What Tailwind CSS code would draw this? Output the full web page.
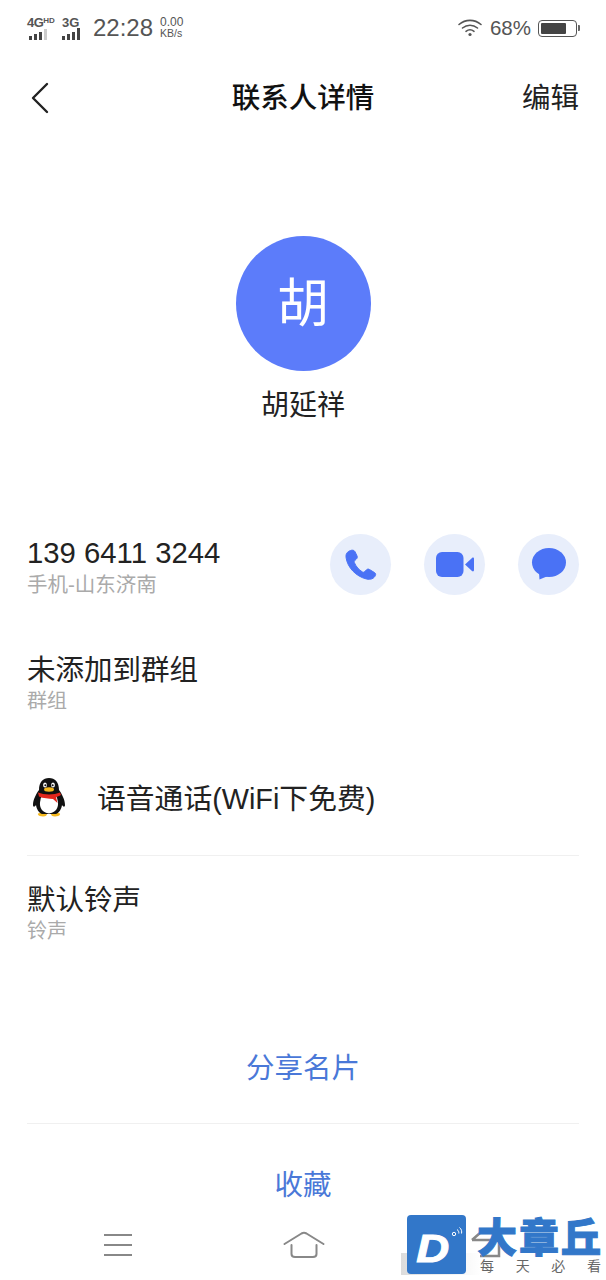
<html>
  <head>
    <title>联系人详情</title>
    <meta charset="utf-8" />
    <script src="https://cdn.jsdelivr.net/npm/@tailwindcss/browser@4"></script>
  </head>
  <body class="bg-white">
    <div class="relative w-[606px] h-[1280px] overflow-hidden bg-white text-[#222] font-['Liberation_Sans','Noto_Sans_CJK_SC',sans-serif]">
      <!-- status bar -->
      <div class="h-[56px] pl-[27px] pr-[26px] flex items-center justify-between text-[#555]">
        <div class="flex items-center">
          <div class="w-[28px] h-[24px] flex flex-col">
            <div class="flex items-start h-[14px]">
              <span class="text-[13px] leading-[13px] font-bold tracking-[-0.5px]">4G</span>
              <span class="text-[8px] leading-[9px] font-bold">HD</span>
            </div>
            <div class="flex items-end gap-[2px] h-[10px] pl-[2px]">
              <i class="block w-[3px] h-[4px] bg-[#444]"></i>
              <i class="block w-[3px] h-[6px] bg-[#444]"></i>
              <i class="block w-[3px] h-[8px] bg-[#444]"></i>
              <i class="block w-[3px] h-[11px] bg-[#ccc]"></i>
            </div>
          </div>
          <div class="ml-[7px] w-[24px] h-[24px] flex flex-col">
            <span class="text-[13px] leading-[14px] font-bold h-[14px]">3G</span>
            <div class="flex items-end gap-[2px] h-[10px]">
              <i class="block w-[3px] h-[4px] bg-[#444]"></i>
              <i class="block w-[3px] h-[6px] bg-[#444]"></i>
              <i class="block w-[3px] h-[8px] bg-[#444]"></i>
              <i class="block w-[3px] h-[12px] bg-[#444]"></i>
            </div>
          </div>
          <span class="ml-[7px] text-[24px] leading-[28px]">22:28</span>
          <div class="ml-[7px] flex flex-col text-[#555] -mt-[1px]">
            <span class="text-[12px] leading-[11px]">0.00</span>
            <span class="text-[10.500px] leading-[11px]">KB/s</span>
          </div>
        </div>
        <div class="flex items-center">
          <svg width="26" height="20" viewBox="0 0 26 20" fill="none" stroke="#555" stroke-width="1.600" stroke-linecap="round">
            <path d="M2 6.500C8.500 1 17.500 1 24 6.500" />
            <path d="M5.500 10C10 6.300 16 6.300 20.500 10" />
            <path d="M9 13.300C11.500 11.400 14.500 11.400 17 13.300" />
            <circle cx="13" cy="16.500" r="1.600" fill="#555" stroke="none" />
          </svg>
          <span class="ml-[7px] text-[20.500px] leading-[28px]">68%</span>
          <div class="ml-[7px] w-[39px] h-[17px] rounded-[4px] border border-[#555] p-[2px] flex">
            <div class="w-[25px] bg-[#444] rounded-[1px]"></div>
          </div>
          <div class="ml-[1px] w-[2px] h-[6px] bg-[#666] rounded-r-[1px]"></div>
        </div>
      </div>

      <!-- nav -->
      <div class="mt-[16px] h-[52px] pl-[30px] pr-[27px] flex items-center justify-between">
        <svg width="20" height="32" viewBox="0 0 20 32" fill="none" stroke="#222" stroke-width="2.400" stroke-linecap="round" stroke-linejoin="round">
          <path d="M17 2L3 16L17 30" />
        </svg>
        <span class="absolute left-0 right-0 text-center text-[28.500px] leading-[44px] font-medium text-[#111]">联系人详情</span>
        <span class="text-[28.500px] leading-[44px]">编辑</span>
      </div>

      <!-- avatar -->
      <div class="mt-[112px] flex flex-col items-center">
        <div class="w-[135px] h-[135px] rounded-full bg-[#5c7cfa] flex items-center justify-center text-white text-[52px]">胡</div>
        <div class="mt-[14px] text-[28px] leading-[42px] text-[#222]">胡延祥</div>
      </div>

      <!-- phone -->
      <div class="mt-[106px] px-[27px] flex items-start justify-between">
        <div>
          <div class="text-[29.300px] leading-[39px]">139 6411 3244</div>
          <div class="text-[20.500px] leading-[26px] text-[#aaa]">手机-山东济南</div>
        </div>
        <div class="mt-[1px] flex gap-[33px]">
          <div class="w-[61px] h-[61px] rounded-full bg-[#e8eefb] flex items-center justify-center">
            <svg class="-ml-[2px]" width="34" height="34" viewBox="0 0 34 34" fill="#4a72f5" stroke="#4a72f5" stroke-width="1">
              <path d="M7.500 2.500C4 3.800 2.500 6 3.100 9.800C4.500 19.500 13 28.500 23.500 31C27.800 32 31 30.500 32.400 27.500C32.900 26.300 32.700 25.400 31.500 24.600L26.500 21.500C25.300 20.800 24.300 21 23.300 22L21.500 23.800C20.900 24.300 20.300 24.400 19.500 24C15.900 21.900 13 18.500 11.300 14.500C11 13.700 11.200 13 11.800 12.500L13.400 11C14.300 10.100 14.500 9.300 14.100 8.100L12 3.700C11.200 2.200 9.500 1.800 7.500 2.500Z" />
            </svg>
          </div>
          <div class="w-[61px] h-[61px] rounded-full bg-[#e8eefb] flex items-center justify-center">
            <svg width="38" height="26" viewBox="0 0 38 26" fill="#4a72f5">
              <rect x="0" y="0" width="27.500" height="25" rx="6" />
              <path d="M29 12.500L36 6C37 5.200 38 5.700 38 7V18C38 19.300 37 19.800 36 19L29 12.500Z" />
            </svg>
          </div>
          <div class="w-[61px] h-[61px] rounded-full bg-[#e8eefb] flex items-center justify-center">
            <svg width="36" height="33" viewBox="0 0 36 33" fill="#4a72f5">
              <ellipse cx="18" cy="14.500" rx="17" ry="14.500" />
              <path d="M8 24L8.500 31.500L17 28Z" />
            </svg>
          </div>
        </div>
      </div>

      <!-- group -->
      <div class="mt-[53px] px-[27px]">
        <div class="text-[28.500px] leading-[38px]">未添加到群组</div>
        <div class="text-[20px] leading-[25px] text-[#aaa]">群组</div>
      </div>

      <!-- qq call -->
      <div class="mt-[62px] mx-[27px] h-[80px] flex items-start border-b border-[#f0f0f0]">
        <svg class="ml-[5px] mt-[1px]" width="34" height="40" viewBox="0 0 34 40">
          <path d="M8 36C4 36 6 39.500 11 39.500C14 39.500 15 38 15 37H19C19 38 20 39.500 23 39.500C28 39.500 30 36 26 36Z" fill="#f5b91f" />
          <path d="M7 13C7 5 11 1 17 1C23 1 27 5 27 13C30 17 33 23 33 28C33 30 31.500 30.500 30 28C29.500 32 27 36 24 37H10C7 36 4.500 32 4 28C2.500 30.500 1 30 1 28C1 23 4 17 7 13Z" fill="#111" />
          <path d="M8.500 23C8.500 19 12 18 17 18C22 18 25.500 19 25.500 23C27 28 26 35 17 36.500C8 35 7 28 8.500 23Z" fill="#fff" />
          <path d="M6 15.500C12 18 22 18 28 15.500L29 18C27 19 25.500 19.800 24 20.200L25.500 26L21 22C17 21.500 11 21.500 7 19.500Z" fill="#e3261c" />
          <ellipse cx="17" cy="12.500" rx="5" ry="2.200" fill="#f5b91f" />
          <ellipse cx="13" cy="8" rx="1.900" ry="2.600" fill="#fff" />
          <ellipse cx="21" cy="8" rx="1.900" ry="2.600" fill="#fff" />
          <circle cx="13.300" cy="8.300" r="1" fill="#111" />
          <circle cx="20.700" cy="8.300" r="1" fill="#111" />
        </svg>
        <span class="ml-[31px] text-[28.800px] leading-[46px]">语音通话(WiFi下免费)</span>
      </div>

      <!-- ringtone -->
      <div class="mt-[25px] px-[27px]">
        <div class="text-[28.500px] leading-[38px]">默认铃声</div>
        <div class="text-[20px] leading-[24px] text-[#aaa]">铃声</div>
      </div>

      <!-- actions -->
      <div class="mt-[105px] mx-[27px] h-[76px] text-center text-[28.500px] leading-[40px] text-[#4a78d8] border-b border-[#f0f0f0]">分享名片</div>
      <div class="mt-[41px] text-center text-[28.500px] leading-[40px] text-[#4a78d8]">收藏</div>

      <!-- bottom nav -->
      <div class="mt-[20px] h-[40px] flex items-center">
        <div class="ml-[104px] w-[28px] flex flex-col gap-[8px]">
          <i class="block h-[2px] bg-[#888]"></i>
          <i class="block h-[2px] bg-[#888]"></i>
          <i class="block h-[2px] bg-[#888]"></i>
        </div>
        <svg class="ml-[151px]" width="42" height="28" viewBox="0 0 42 28" fill="none" stroke="#888" stroke-width="2" stroke-linecap="round" stroke-linejoin="round">
          <path d="M1.500 13L18.500 2.500C20 1.700 22 1.700 23.500 2.500L40.500 13" />
          <path d="M8.500 14V23C8.500 25 10 26 12 26H30C32 26 33.500 25 33.500 23V14" />
        </svg>
        <svg class="ml-[146px]" width="32" height="26" viewBox="0 0 32 26" fill="none" stroke="#888" stroke-width="2.500">
          <path d="M1 8H28M1 8L9 1M9 8H28M9 24H28V8" />
        </svg>
      </div>

      <!-- watermark -->
      <div class="absolute left-[401px] top-[1215px] w-[205px] h-[60px] flex items-start">
        <div class="absolute left-0 top-[38px] w-[80px] h-[22px] bg-gradient-to-r from-[#dcdcdc] to-white/0"></div>
        <div class="relative ml-[6px] w-[59px] h-[59px] rounded-[4px] bg-[#3277c9] flex items-center justify-center">
          <span class="text-white text-[38px] leading-[38px] font-bold italic -ml-[8px] mt-[8px] scale-x-[1.2] [-webkit-text-stroke:1px_white]">D</span>
          <svg class="absolute left-[44px] top-[11px]" width="12" height="12" viewBox="0 0 12 12" fill="none" stroke="#fff" stroke-width="1">
            <circle cx="3" cy="8" r="1.700" />
            <path d="M6 3.500C7.500 4.500 8 6 7.800 7.500M8.500 1.500C10.500 3 11 5.500 10.500 7.500" />
          </svg>
        </div>
        <div class="relative ml-[11px] w-[125px] flex flex-col">
          <div class="h-[40px] text-[#3277c9] text-[40px] leading-[40px] font-black font-['Noto_Sans_CJK_SC'] tracking-[2px] whitespace-nowrap [-webkit-text-stroke:1px_#3277c9]">大章丘</div>
          <div class="mt-[1px] pl-[3px] pr-[1px] flex justify-between text-[#666] text-[14px] leading-[18px] font-['Noto_Sans_CJK_SC']">
            <div>每</div>
            <div>天</div>
            <div>必</div>
            <div>看</div>
          </div>
        </div>
      </div>
    </div>
  </body>
</html>
